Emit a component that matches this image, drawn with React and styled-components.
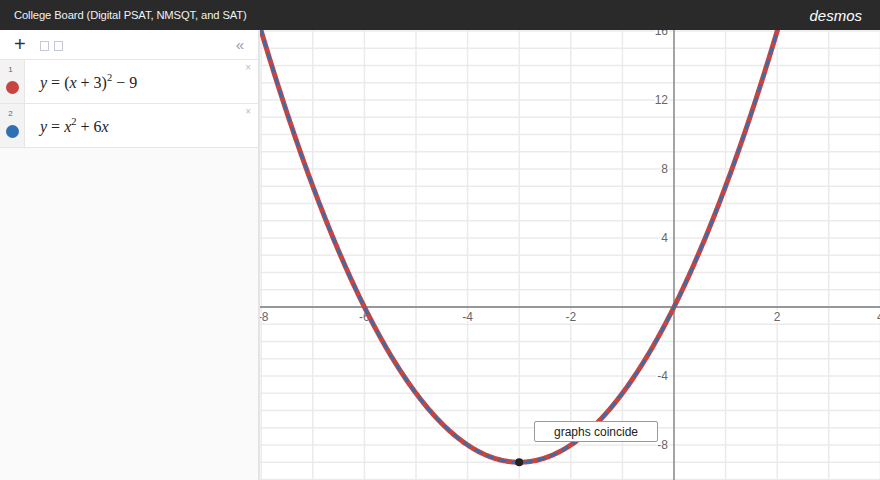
import React from "react";
import styled, { createGlobalStyle } from "styled-components";

const GlobalStyle = createGlobalStyle`
  html, body { margin: 0; padding: 0; background: #fff; }
  body { font-family: "Liberation Sans", Arial, sans-serif; }
`;

const Page = styled.div`
  width: 880px;
  height: 480px;
  display: flex;
  flex-direction: column;
  overflow: hidden;
`;

const Header = styled.div`
  height: 30px;
  flex: none;
  background: #2a2a2a;
  color: #f2f2f2;
  display: flex;
  align-items: center;
  justify-content: space-between;
  padding: 0 18px 0 14px;
`;

const Title = styled.div`
  font-size: 11.2px;
  letter-spacing: -0.1px;
`;

const Brand = styled.div`
  font-style: italic;
  font-size: 15px;
  color: #fff;
`;

const Body = styled.div`
  flex: 1;
  display: flex;
  min-height: 0;
`;

const Sidebar = styled.div`
  width: 258px;
  flex: none;
  background: #fafafa;
  border-right: 2px solid #e4e4e4;
  display: flex;
  flex-direction: column;
`;

const Toolbar = styled.div`
  height: 29px;
  background: #fff;
  border-bottom: 1px solid #e6e6e6;
  display: flex;
  align-items: center;
  padding: 0 0 0 14px;
`;

const PlusIcon = styled.span`
  font-size: 20px;
  line-height: 1;
  color: #333;
  width: 16px;
  margin-right: 10px;
  margin-top: -2px;
`;

const Square = styled.span`
  width: 7px;
  height: 8px;
  border: 1px solid #c4c9d4;
  margin-right: 5px;
  margin-top: 2px;
`;

const Collapse = styled.span`
  margin-left: auto;
  margin-right: 14px;
  font-size: 15px;
  color: #8d9bb5;
  margin-top: -1px;
`;

const Row = styled.div`
  height: 43px;
  background: #fff;
  border-bottom: 1px solid #e6e6e6;
  display: flex;
  position: relative;
`;

const Gutter = styled.div`
  width: 25px;
  background: #f3f3f3;
  border-right: 1px solid #e6e6e6;
  display: flex;
  flex-direction: column;
  align-items: center;
  padding-top: 5px;
  box-sizing: border-box;
`;

const Num = styled.span`
  font-size: 8px;
  color: #666;
  margin-left: -3px;
`;

const Dot = styled.span`
  width: 13px;
  height: 13px;
  border-radius: 50%;
  background: ${p => p.color};
  margin-top: 7px;
`;

const Math = styled.div`
  font-family: "Liberation Serif", "Times New Roman", serif;
  font-size: 16px;
  color: #222;
  padding-left: 15px;
  padding-top: 14px;
  i { font-style: italic; }
  sup { font-size: 10.5px; vertical-align: 0; position: relative; top: -7px; }
`;

const Remove = styled.span`
  position: absolute;
  right: 7px;
  top: 2px;
  font-size: 10px;
  color: #bbb;
`;

const Graph = styled.div`
  flex: 1;
  position: relative;
  background: #fff;
  overflow: hidden;
`;

const Tooltip = styled.div`
  position: absolute;
  left: 274px;
  top: 391px;
  width: 122px;
  height: 19px;
  border: 1px solid #999;
  border-radius: 2px;
  background: #fff;
  font-size: 12px;
  color: #222;
  display: flex;
  align-items: center;
  justify-content: center;
`;

const W = 620;
const H = 450;
const X0 = 414;
const Y0 = 277;
const UX = 51.6;
const UY = 17.25;
const px = x => X0 + x * UX;
const py = y => Y0 - y * UY;

const curve = (() => {
  const pts = [];
  for (let x = -8.3; x <= 4.3; x += 0.02) {
    pts.push(`${px(x).toFixed(2)},${py((x + 3) ** 2 - 9).toFixed(2)}`);
  }
  return "M" + pts.join(" L");
})();

const labelStyle = {
  fontFamily: "Liberation Sans, Arial, sans-serif",
  fontSize: 12,
  fill: "#666",
  stroke: "#fff",
  strokeWidth: 3,
  paintOrder: "stroke",
};

function Plot() {
  const vx = [];
  for (let x = -8; x <= 4; x++) vx.push(x);
  const hy = [];
  for (let y = -10; y <= 16; y++) hy.push(y);
  return (
    <svg width={W} height={H} style={{ display: "block" }}>
      {vx.map(x => (
        <line key={"v" + x} x1={px(x)} x2={px(x)} y1={0} y2={H} stroke="#ebebeb" strokeWidth="1.5" />
      ))}
      {hy.map(y => (
        <line key={"h" + y} x1={0} x2={W} y1={py(y)} y2={py(y)} stroke="#ebebeb" strokeWidth="1.5" />
      ))}
      <line x1={px(0)} x2={px(0)} y1={0} y2={H} stroke="#7a7a7a" strokeWidth="1.3" />
      <line x1={0} x2={W} y1={Y0} y2={Y0} stroke="#7a7a7a" strokeWidth="1.3" />
      {[-8, -6, -4, -2, 2, 4].map(x => (
        <text key={"lx" + x} x={x === -8 ? px(x) + 2 : px(x)} y={Y0 + 14} textAnchor="middle" style={labelStyle}>
          {x}
        </text>
      ))}
      {[16, 12, 8, 4, -4, -8].map(y => (
        <text key={"ly" + y} x={px(0) - 6} y={py(y) + 4} textAnchor="end" style={labelStyle}>
          {y}
        </text>
      ))}
      <path d={curve} fill="none" stroke="#c74440" strokeWidth="5" strokeLinecap="round" />
      <path d={curve} fill="none" stroke="#2d70b3" strokeWidth="2.5" strokeDasharray="8 5" />
      <circle cx={px(-3)} cy={py(-9)} r="4" fill="#222" />
    </svg>
  );
}

export default function App() {
  return (
    <Page>
      <GlobalStyle />
      <Header>
        <Title>College Board (Digital PSAT, NMSQT, and SAT)</Title>
        <Brand>desmos</Brand>
      </Header>
      <Body>
        <Sidebar>
          <Toolbar>
            <PlusIcon>+</PlusIcon>
            <Square />
            <Square />
            <Collapse>«</Collapse>
          </Toolbar>
          <Row>
            <Gutter>
              <Num>1</Num>
              <Dot color="#c74440" />
            </Gutter>
            <Math>
              <i>y</i> = (<i>x</i> + 3)<sup>2</sup> − 9
            </Math>
            <Remove>×</Remove>
          </Row>
          <Row>
            <Gutter>
              <Num>2</Num>
              <Dot color="#2d70b3" />
            </Gutter>
            <Math>
              <i>y</i> = <i>x</i><sup>2</sup> + 6<i>x</i>
            </Math>
            <Remove>×</Remove>
          </Row>
        </Sidebar>
        <Graph>
          <Plot />
          <Tooltip>graphs coincide</Tooltip>
        </Graph>
      </Body>
    </Page>
  );
}
